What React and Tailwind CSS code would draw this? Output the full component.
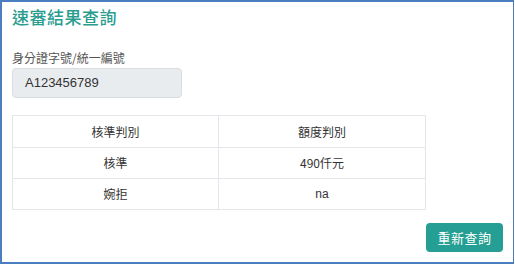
export default function App() {
  const font = { fontFamily: '"Noto Sans CJK TC", "Liberation Sans", sans-serif' };
  return (
    <div className="w-[515px] h-[264px] bg-white">
      <div
        className="w-[514px] h-[264px] border-2 border-[#4a7ebf] border-r-[1.5px] bg-white flex flex-col pl-[10px] pr-[10px] text-[#333]"
        style={font}
      >
        <h1 className="text-[17px] leading-[20px] text-[#2a9d8f] font-medium mt-[5px] tracking-[0.5px]">速審結果查詢</h1>
        <label className="mt-[23px] text-[12px] leading-[16px] text-[#555]">身分證字號/統一編號</label>
        <div className="mt-[2px] w-[170px] h-[30px] bg-[#e9ecef] border border-[#d9dde1] rounded-[4px] flex items-center pl-[12px] text-[13px] text-[#333]" style={{ fontFamily: '"Liberation Sans", sans-serif' }}>
          A123456789
        </div>
        <table className="mt-[17px] w-[414px] border-collapse text-[12px] text-[#333]">
          <tbody>
            <tr className="h-[32px]">
              <td className="border border-[#e3e6ea] text-center w-[206px]">核準判別</td>
              <td className="border border-[#e3e6ea] text-center">額度判別</td>
            </tr>
            <tr className="h-[31px]">
              <td className="border border-[#e3e6ea] text-center">核準</td>
              <td className="border border-[#e3e6ea] text-center">490仟元</td>
            </tr>
            <tr className="h-[31px]">
              <td className="border border-[#e3e6ea] text-center">婉拒</td>
              <td className="border border-[#e3e6ea] text-center" style={{ fontFamily: '"Liberation Sans", sans-serif' }}>na</td>
            </tr>
          </tbody>
        </table>
        <div className="flex justify-end mt-[13px]">
          <button className="w-[77px] h-[29px] bg-[#259f94] text-white text-[13px] rounded-[4px] tracking-[0.5px]">重新查詢</button>
        </div>
      </div>
    </div>
  );
}
